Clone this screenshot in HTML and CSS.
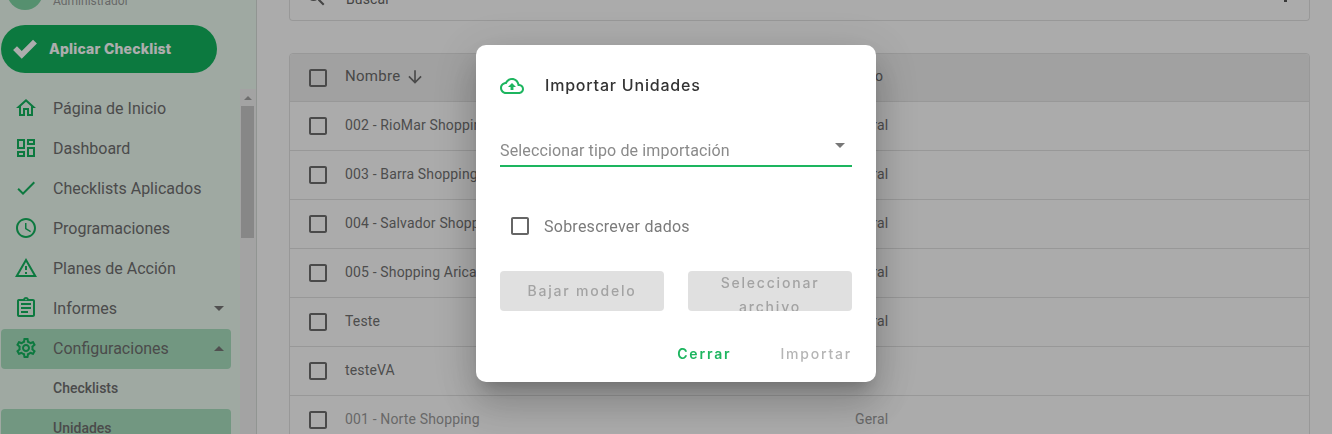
FILE: index.html
```html
<!DOCTYPE html>
<html lang="es">
<head>
<meta charset="utf-8">
<title>Importar Unidades</title>
<link rel="stylesheet" href="styles.css">
</head>
<body>
<svg class="defs" width="0" height="0" aria-hidden="true">
  <symbol id="i-home" viewBox="0 0 24 24"><path d="M12 5.69l5 4.5V18h-2v-6H9v6H7v-7.81l5-4.5M12 3L2 12h3v8h6v-6h2v6h6v-8h3L12 3z"/></symbol>
  <symbol id="i-dash" viewBox="0 0 24 24"><path d="M19 5v2h-4V5h4M9 5v6H5V5h4m10 8v6h-4v-6h4M9 17v2H5v-2h4M21 3h-8v6h8V3zM11 3H3v10h8V3zm10 8h-8v10h8V11zm-10 4H3v6h8v-6z"/></symbol>
  <symbol id="i-check" viewBox="0 0 24 24"><path d="M9 16.17L4.83 12l-1.42 1.41L9 19 21 7l-1.41-1.41z"/></symbol>
  <symbol id="i-clock" viewBox="0 0 24 24"><path d="M11.99 2C6.47 2 2 6.48 2 12s4.47 10 9.99 10C17.52 22 22 17.52 22 12S17.52 2 11.99 2zM12 20c-4.42 0-8-3.58-8-8s3.58-8 8-8 8 3.58 8 8-3.58 8-8 8zm.5-13H11v6l5.25 3.15.75-1.23-4.5-2.67z"/></symbol>
  <symbol id="i-warn" viewBox="0 0 24 24"><path d="M12 5.99L19.53 19H4.47L12 5.99M12 2L1 21h22L12 2zm1 14h-2v2h2v-2zm0-6h-2v4h2v-4z"/></symbol>
  <symbol id="i-report" viewBox="0 0 24 24"><path d="M7 15h7v2H7zm0-4h10v2H7zm0-4h10v2H7zm12-4h-4.18C14.4 1.84 13.3 1 12 1c-1.3 0-2.4.84-2.82 2H5c-.14 0-.27.01-.4.04-.39.08-.74.28-1.01.55-.18.18-.33.4-.43.64-.1.23-.16.49-.16.77v14c0 .27.06.54.16.78s.25.45.43.64c.27.27.62.47 1.01.55.13.02.26.03.4.03h14c1.1 0 2-.9 2-2V5c0-1.1-.9-2-2-2zm-7-.25c.41 0 .75.34.75.75s-.34.75-.75.75-.75-.34-.75-.75.34-.75.75-.75zM19 19H5V5h14v14z"/></symbol>
  <symbol id="i-gear" viewBox="0 0 24 24"><path d="M19.43 12.98c.04-.32.07-.64.07-.98 0-.34-.03-.66-.07-.98l2.11-1.65c.19-.15.24-.42.12-.64l-2-3.46c-.09-.16-.26-.25-.44-.25-.06 0-.12.01-.17.03l-2.49 1c-.52-.4-1.08-.73-1.69-.98l-.38-2.65C14.46 2.18 14.25 2 14 2h-4c-.25 0-.46.18-.49.42l-.38 2.65c-.61.25-1.17.59-1.69.98l-2.49-1c-.06-.02-.12-.03-.18-.03-.17 0-.34.09-.43.25l-2 3.46c-.13.22-.07.49.12.64l2.11 1.65c-.04.32-.07.65-.07.98 0 .33.03.66.07.98l-2.11 1.65c-.19.15-.24.42-.12.64l2 3.46c.09.16.26.25.44.25.06 0 .12-.01.17-.03l2.49-1c.52.4 1.08.73 1.69.98l.38 2.65c.03.24.24.42.49.42h4c.25 0 .46-.18.49-.42l.38-2.65c.61-.25 1.17-.59 1.69-.98l2.49 1c.06.02.12.03.18.03.17 0 .34-.09.43-.25l2-3.46c.12-.22.07-.49-.12-.64l-2.11-1.65zm-1.98-1.71c.04.31.05.52.05.73 0 .21-.02.43-.05.73l-.14 1.13.89.7 1.08.84-.7 1.21-1.27-.51-1.04-.42-.9.68c-.43.32-.84.56-1.25.73l-1.06.43-.16 1.13-.2 1.35h-1.4l-.19-1.35-.16-1.13-1.06-.43c-.43-.18-.83-.41-1.23-.71l-.91-.7-1.06.43-1.27.51-.7-1.21 1.08-.84.89-.7-.14-1.13c-.03-.31-.05-.54-.05-.74s.02-.43.05-.73l.14-1.13-.89-.7-1.08-.84.7-1.21 1.27.51 1.04.42.9-.68c.43-.32.84-.56 1.25-.73l1.06-.43.16-1.13.2-1.35h1.39l.19 1.35.16 1.13 1.06.43c.43.18.83.41 1.23.71l.91.7 1.06-.43 1.27-.51.7 1.21-1.07.85-.89.7.14 1.13zM12 8c-2.21 0-4 1.79-4 4s1.79 4 4 4 4-1.79 4-4-1.79-4-4-4zm0 6c-1.1 0-2-.9-2-2s.9-2 2-2 2 .9 2 2-.9 2-2 2z"/></symbol>
  <symbol id="i-box" viewBox="0 0 24 24"><path d="M19 5v14H5V5h14m0-2H5c-1.1 0-2 .9-2 2v14c0 1.1.9 2 2 2h14c1.1 0 2-.9 2-2V5c0-1.1-.9-2-2-2z"/></symbol>
  <symbol id="i-cloud" viewBox="0 0 24 24"><path d="M19.35 10.04C18.67 6.59 15.64 4 12 4 9.11 4 6.6 5.64 5.35 8.04 2.34 8.36 0 10.91 0 14c0 3.31 2.69 6 6 6h13c2.76 0 5-2.24 5-5 0-2.64-2.05-4.78-4.65-4.96zM19 18H6c-2.21 0-4-1.79-4-4 0-2.05 1.53-3.76 3.56-3.97l1.07-.11.5-.95C8.08 7.14 9.94 6 12 6c2.62 0 4.88 1.86 5.39 4.43l.3 1.5 1.53.11c1.56.1 2.78 1.41 2.78 2.96 0 1.65-1.35 3-3 3zM8 13h2.55v3h2.9v-3H16l-4-4z"/></symbol>
  <symbol id="i-search" viewBox="0 0 24 24"><path d="M15.5 14h-.79l-.28-.27C15.41 12.59 16 11.11 16 9.5 16 5.91 13.09 3 9.5 3S3 5.91 3 9.5 5.91 16 9.5 16c1.61 0 3.09-.59 4.23-1.57l.27.28v.79l5 4.99L20.49 19l-4.99-5zm-6 0C7.01 14 5 11.99 5 9.5S7.01 5 9.5 5 14 7.01 14 9.5 11.99 14 9.5 14z"/></symbol>
  <symbol id="i-down" viewBox="0 0 24 24"><path d="M20 12l-1.41-1.41L13 16.17V4h-2v12.17l-5.58-5.59L4 12l8 8 8-8z"/></symbol>
</svg>

<div class="app">
  <aside class="sidebar">
    <div class="user">
      <span class="avatar"></span>
      <span class="role">Administrador</span>
    </div>
    <button class="apply" type="button">
      <svg class="apply-icon" viewBox="0 0 24 24"><path d="M9 21L1 13l3.6-3.6L9 13.8 19.4 3.4 23 7z"/></svg>
      <span>Aplicar Checklist</span>
    </button>
    <div class="scroller">
      <nav class="menu">
        <a class="item"><svg class="ic"><use href="#i-home"/></svg><span>Página de Inicio</span></a>
        <a class="item"><svg class="ic"><use href="#i-dash"/></svg><span>Dashboard</span></a>
        <a class="item"><svg class="ic"><use href="#i-check"/></svg><span>Checklists Aplicados</span></a>
        <a class="item"><svg class="ic"><use href="#i-clock"/></svg><span>Programaciones</span></a>
        <a class="item"><svg class="ic"><use href="#i-warn"/></svg><span>Planes de Acción</span></a>
        <a class="item"><svg class="ic"><use href="#i-report"/></svg><span>Informes</span><i class="caret down"></i></a>
        <a class="item active"><svg class="ic"><use href="#i-gear"/></svg><span>Configuraciones</span><i class="caret up"></i></a>
        <a class="item sub">Checklists</a>
        <a class="item sub active">Unidades</a>
      </nav>
      <div class="scrollbar">
        <i class="sb-arrow"></i>
        <div class="sb-thumb"></div>
      </div>
    </div>
  </aside>

  <main class="content">
    <div class="search">
      <svg class="search-ic"><use href="#i-search"/></svg>
      <span class="search-text">Buscar</span>
      <span class="search-dot"></span>
    </div>
    <div class="table">
      <div class="row head">
        <svg class="box"><use href="#i-box"/></svg>
        <div class="cell name">Nombre <svg class="sort"><use href="#i-down"/></svg></div>
        <div class="cell type">Tipo</div>
      </div>
      <div class="row"><svg class="box"><use href="#i-box"/></svg><div class="cell name">002 - RioMar Shopping</div><div class="cell type">Geral</div></div>
      <div class="row"><svg class="box"><use href="#i-box"/></svg><div class="cell name">003 - Barra Shopping</div><div class="cell type">Geral</div></div>
      <div class="row"><svg class="box"><use href="#i-box"/></svg><div class="cell name">004 - Salvador Shopping</div><div class="cell type">Geral</div></div>
      <div class="row"><svg class="box"><use href="#i-box"/></svg><div class="cell name">005 - Shopping Arica</div><div class="cell type">Geral</div></div>
      <div class="row"><svg class="box"><use href="#i-box"/></svg><div class="cell name">Teste</div><div class="cell type">Geral</div></div>
      <div class="row"><svg class="box"><use href="#i-box"/></svg><div class="cell name">testeVA</div><div class="cell type"></div></div>
      <div class="row muted"><svg class="box"><use href="#i-box"/></svg><div class="cell name">001 - Norte Shopping</div><div class="cell type">Geral</div></div>
    </div>
  </main>
</div>

<div class="backdrop"></div>

<section class="dialog" role="dialog">
  <header class="dialog-title">
    <svg class="cloud"><use href="#i-cloud"/></svg>
    <h2>Importar Unidades</h2>
  </header>
  <div class="select">
    <span>Seleccionar tipo de importación</span>
    <i class="select-caret"></i>
  </div>
  <label class="overwrite">
    <svg class="box-dlg"><use href="#i-box"/></svg>
    <span>Sobrescrever dados</span>
  </label>
  <div class="file-actions">
    <button class="disabled-btn" type="button">Bajar modelo</button>
    <button class="disabled-btn" type="button">Seleccionar archivo</button>
  </div>
  <footer class="dialog-actions">
    <button class="text-btn close" type="button">Cerrar</button>
    <button class="text-btn import" type="button">Importar</button>
  </footer>
</section>
</body>
</html>
```

FILE: styles.css
```css
* { box-sizing: border-box; }
html, body { height: 100%; }
body {
  margin: 0;
  height: 434px;
  overflow: hidden;
  background: #fdfdfd;
  font-family: Roboto, "Liberation Sans", sans-serif;
  color: #666;
}
.defs { position: absolute; }
.app { display: flex; height: 434px; overflow: hidden; }

/* sidebar */
.sidebar {
  flex: 0 0 257px;
  height: 470px;
  margin-top: -26px;
  background: #ebf9ef;
  border-right: 1px solid #d6dcd8;
  display: flex;
  flex-direction: column;
}
.user { display: flex; align-items: flex-start; height: 36px; padding-left: 7px; gap: 10px; flex: none; }
.avatar { width: 36px; height: 36px; border-radius: 50%; background: #7fd4a4; flex: none; }
.role { font-size: 12px; line-height: 14px; color: #999; margin-top: 20px; }
.apply {
  flex: none;
  margin: 15px 0 0 1px;
  width: 216px;
  height: 48px;
  border: 0;
  border-radius: 24px;
  background: #13b35e;
  color: #fff;
  display: flex;
  align-items: center;
  padding: 0 0 2px 11px;
  gap: 11px;
  font-family: Inter, sans-serif;
  font-weight: 800;
  font-size: 14px;
  letter-spacing: .2px;
}
.apply-icon { width: 26px; height: 26px; fill: #fff; margin-top: 2px; }
.scroller { flex: 1; display: flex; margin-top: 16px; min-height: 0; }
.menu { flex: 0 0 230px; margin-left: 1px; }
.item {
  display: flex;
  align-items: center;
  height: 40px;
  padding: 0 0 2px 13px;
  border-radius: 4px;
  font-size: 16px;
  color: #6f6f6f;
}
.item > span { flex: 1; }
.item.active { background: #a8dfbe; }
.item.sub { padding-left: 52px; font-size: 14px; font-weight: 500; color: #6f6f6f; }
.ic { width: 24px; height: 24px; fill: #13b35e; margin-right: 15px; flex: none; }
.caret { width: 0; height: 0; border-left: 5px solid transparent; border-right: 5px solid transparent; margin-right: 7px; }
.caret.down { border-top: 5px solid #777; }
.caret.up { border-bottom: 5px solid #777; }
.scrollbar { flex: 0 0 16px; margin-left: 9px; background: #f1f1f1; position: relative; padding-top: 17px; }
.sb-arrow { position: absolute; top: 7px; left: 4px; width: 0; height: 0; border-left: 4px solid transparent; border-right: 4px solid transparent; border-bottom: 4px solid #a3a3a3; }
.sb-thumb { width: 13px; margin-left: 1px; height: 132px; background: #c8c8c8; }

/* content */
.content { flex: 1; padding: 0 22px 0 32px; min-width: 0; }
.search {
  height: 21px;
  border: 1px solid #e0e0e0;
  border-top: 0;
  border-radius: 0 0 4px 4px;
  position: relative;
  font-size: 14px;
  letter-spacing: .15px;
  color: #666;
  overflow: hidden;
}
.search-ic { width: 24px; height: 24px; fill: #666; position: absolute; left: 14px; top: -15px; }
.search-text { position: absolute; left: 56px; top: -9px; line-height: 16px; }
.search-dot { position: absolute; right: 22px; top: 0; width: 3px; height: 2px; background: #555; }
.table {
  margin-top: 32px;
  border: 1px solid #e0e0e0;
  border-radius: 4px 4px 0 0;
  background: #fdfdfd;
}
.row {
  display: flex;
  align-items: center;
  height: 49px;
  border-bottom: 1px solid #e0e0e0;
  padding-left: 16px;
  font-size: 14px;
  letter-spacing: .15px;
  color: #727272;
}
.row.head { height: 48px; background: #eeeeee; border-radius: 4px 4px 0 0; color: #6b6b6b; }
.row.head .cell { padding-bottom: 3px; }
.row.head .name { font-size: 15px; letter-spacing: .3px; }
.row.muted { color: #9a9a9a; }
.box { width: 24px; height: 24px; fill: #6e6e6e; flex: none; margin-right: 15px; }
.cell { padding-bottom: 2px; }
.cell.name { flex: 0 0 510px; display: flex; align-items: center; gap: 4px; }
.sort { width: 20px; height: 20px; fill: #6e6e6e; margin-top: 2px; }

/* overlay + dialog */
.backdrop { position: fixed; inset: 0; background: rgba(0, 0, 0, .32); }
.dialog {
  position: fixed;
  left: 476px;
  top: 45px;
  width: 400px;
  height: 337px;
  background: #fff;
  border-radius: 10px;
  padding: 0 24px;
  box-shadow: 0 11px 15px -7px rgba(0,0,0,.2), 0 24px 38px 3px rgba(0,0,0,.14), 0 9px 46px 8px rgba(0,0,0,.12);
  display: flex;
  flex-direction: column;
}
.dialog-title { display: flex; align-items: center; height: 24px; margin-top: 29px; gap: 21px; }
.cloud { width: 24px; height: 24px; fill: #1db55f; flex: none; }
.dialog-title h2 { margin: 0; padding-bottom: 2px; font-family: Inter, sans-serif; font-size: 16px; font-weight: 500; color: #333; letter-spacing: .8px; }
.select {
  margin-top: 31px;
  height: 38px;
  border-bottom: 2px solid #1db55f;
  position: relative;
  display: flex;
  align-items: flex-end;
  padding-bottom: 5px;
  font-size: 16px;
  line-height: 19px;
  letter-spacing: .13px;
  color: #8a8a8a;
}
.select-caret { position: absolute; right: 7px; top: 14px; width: 0; height: 0; border-left: 5px solid transparent; border-right: 5px solid transparent; border-top: 5px solid #777; }
.overwrite { display: flex; align-items: center; height: 24px; margin-top: 47px; padding-left: 8px; font-size: 16px; letter-spacing: .25px; color: #7b7b7b; gap: 12px; }
.box-dlg { width: 24px; height: 24px; fill: #666; flex: none; }
.file-actions { display: flex; gap: 24px; margin-top: 33px; }
.disabled-btn {
  flex: 1;
  height: 40px;
  border: 0;
  border-radius: 4px;
  background: #e0e0e0;
  color: #a3a3a3;
  font-family: Inter, sans-serif;
  font-size: 14px;
  font-weight: 500;
  letter-spacing: 1.8px;
  line-height: 24px;
  padding: 0 16px;
  overflow: hidden;
  align-self: flex-start;
}
.dialog-actions { display: flex; justify-content: flex-end; gap: 49px; margin-top: 31px; }
.text-btn {
  border: 0;
  background: none;
  padding: 0;
  font-family: Inter, sans-serif;
  font-size: 14px;
  font-weight: 600;
  letter-spacing: 1.8px;
  line-height: 24px;
}
.close { color: #1db55f; }
.import { color: #b5b5b5; font-weight: 500; }
```
